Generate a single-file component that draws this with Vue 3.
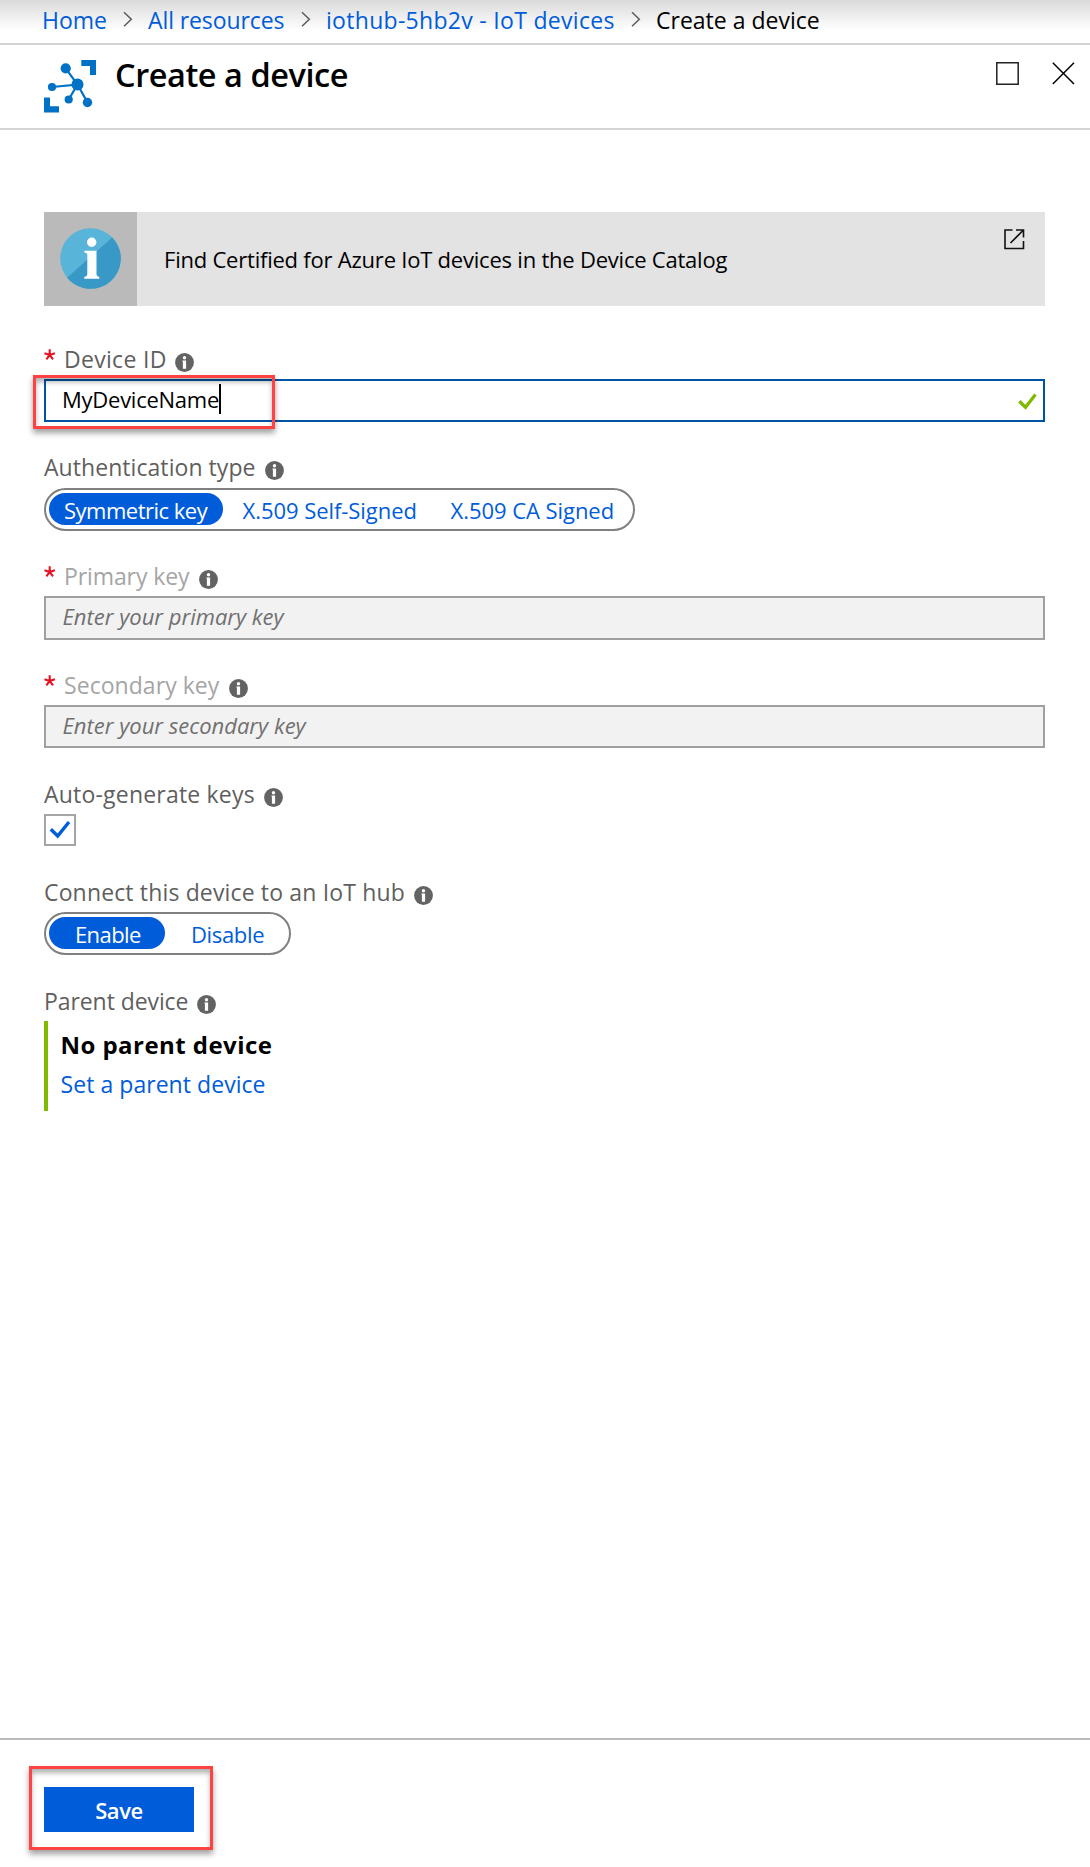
<script setup>
import { ref, h } from 'vue'

const deviceId = ref('MyDeviceName')
const authTypes = [
  { label: 'Symmetric key', cls: 'opt-sym' },
  { label: 'X.509 Self-Signed', cls: 'opt-self' },
  { label: 'X.509 CA Signed', cls: 'opt-ca' }
]
const authType = ref('Symmetric key')
const hubStates = [
  { label: 'Enable', cls: 'opt-on' },
  { label: 'Disable', cls: 'opt-off' }
]
const hubState = ref('Enable')

const InfoIcon = () =>
  h('svg', { width: 19, height: 19, viewBox: '0 0 19 19' }, [
    h('circle', { cx: 9.5, cy: 9.5, r: 9.4, fill: '#636363' }),
    h('circle', { cx: 9.5, cy: 4.7, r: 1.7, fill: '#fff' }),
    h('path', { d: 'M7.4 7.5h3.7v8.2H7.9V8.6h-.5z', fill: '#fff' })
  ])
const Chevron = () =>
  h('svg', { width: 10, height: 17, viewBox: '0 0 10 17' }, [
    h('path', { d: 'M1 1.3 8.3 8.3 1 15.3', fill: 'none', stroke: '#5c5c5c', 'stroke-width': 1.5 })
  ])
const Required = () =>
  h('svg', { width: 12, height: 12, viewBox: '0 0 12 12' }, [
    h('path', {
      d: 'M5.7 5.9V0.3M5.7 5.9 0.5 4.2M5.7 5.9 10.9 4.2M5.7 5.9 2.4 10.3M5.7 5.9 9 10.3',
      fill: 'none', stroke: '#e81123', 'stroke-width': 2.1
    })
  ])
</script>

<template>
  <div class="blade">
    <nav class="crumbs">
      <a class="c-home">Home</a><Chevron class="chev" />
      <a class="c-all">All resources</a><Chevron class="chev" />
      <a class="c-hub">iothub-5hb2v - IoT devices</a><Chevron class="chev" />
      <span class="c-now">Create a device</span>
    </nav>

    <header class="head">
      <svg class="logo" width="53" height="53" viewBox="0 0 53 53">
        <g fill="#0072c6">
          <path d="M37.3 0H52v15h-6V6h-8.700z M0 37.500h6v8.700h9V52.500H0z" />
          <circle cx="21.700" cy="8.300" r="5.100" />
          <circle cx="8" cy="27" r="4.100" />
          <circle cx="33.500" cy="24.500" r="6" />
          <circle cx="24.700" cy="39.500" r="4.100" />
          <circle cx="43.500" cy="42.500" r="4.700" />
        </g>
        <path d="M21.700 8.300 33.500 24.500 8 27M24.700 39.500 33.500 24.500 43.500 42.500" fill="none" stroke="#0072c6" stroke-width="2.200" />
      </svg>
      <h1>Create a device</h1>
      <div class="win">
        <svg width="23" height="23" viewBox="0 0 23 23"><path d="M.8.8h21.400v21.400H.8z" fill="none" stroke="#222" stroke-width="1.500" /></svg>
        <svg width="23" height="23" viewBox="0 0 23 23"><path d="M.8.8 22 22M22 .8.8 22" fill="none" stroke="#000" stroke-width="1.500" /></svg>
      </div>
    </header>

    <main class="body">
      <div class="banner">
        <div class="banner-icon">
          <svg width="61" height="61" viewBox="0 0 61 61">
            <circle cx="30.500" cy="30.500" r="30.300" fill="#59b4d9" />
            <path d="M52.220 9.380A30.300 30.300 0 1 1 7.050 49.690z" fill="#3999c6" />
            <circle cx="31.700" cy="14.300" r="4.700" fill="#fff" />
            <path d="M24.300 22.700H36.500V46.500Q36.500 48.300 39.300 49V50.700H24.300V49Q27.300 48.300 27.300 46.500V26.500Q27.300 24.700 24.300 24.400z" fill="#fff" />
          </svg>
        </div>
        <span class="banner-text">Find Certified for Azure IoT devices in the Device Catalog</span>
        <svg class="ext" width="21" height="21" viewBox="0 0 21 21">
          <path d="M8.500 1H1V19.500H19.500V12M12 1H19.500V8.500M19.500 1 6.500 14" fill="none" stroke="#111" stroke-width="1.600" />
        </svg>
      </div>

      <section class="field">
        <div class="label"><Required class="req" /><span class="l-id">Device ID</span><InfoIcon class="info" /></div>
        <div class="input focus">
          <span class="value">{{ deviceId }}</span><i class="caret"></i>
          <svg class="ok" width="19" height="17" viewBox="0 0 19 17"><path d="M1.300 8.200 7.500 14.300 17.500 1.500" fill="none" stroke="#7fba00" stroke-width="3.300" /></svg>
          <div class="mark mark-id"></div>
        </div>
      </section>

      <section class="field tight">
        <div class="label"><span class="l-auth">Authentication type</span><InfoIcon class="info" /></div>
        <div class="pill pill-auth">
          <button v-for="o in authTypes" :key="o.label" :class="[o.cls, { on: authType === o.label }]" @click="authType = o.label">{{ o.label }}</button>
        </div>
      </section>

      <section class="field tight">
        <div class="label off"><Required class="req" /><span class="l-pri">Primary key</span><InfoIcon class="info" /></div>
        <div class="input disabled tall"><span class="ph">Enter your primary key</span></div>
      </section>

      <section class="field">
        <div class="label off"><Required class="req" /><span class="l-sec">Secondary key</span><InfoIcon class="info" /></div>
        <div class="input disabled"><span class="ph">Enter your secondary key</span></div>
      </section>

      <section class="field">
        <div class="label"><span class="l-auto">Auto-generate keys</span><InfoIcon class="info" /></div>
        <div class="check">
          <svg width="22" height="20" viewBox="0 0 22 20"><path d="M1.800 9.200 8.700 16 20 2" fill="none" stroke="#015cda" stroke-width="3.400" /></svg>
        </div>
      </section>

      <section class="field">
        <div class="label"><span class="l-con">Connect this device to an IoT hub</span><InfoIcon class="info" /></div>
        <div class="pill pill-hub">
          <button v-for="o in hubStates" :key="o.label" :class="[o.cls, { on: hubState === o.label }]" @click="hubState = o.label">{{ o.label }}</button>
        </div>
      </section>

      <section class="field">
        <div class="label"><span class="l-par">Parent device</span><InfoIcon class="info" /></div>
        <div class="parent">
          <strong>No parent device</strong>
          <a>Set a parent device</a>
        </div>
      </section>
    </main>

    <footer class="foot">
      <div class="save-wrap">
        <button class="save">Save</button>
        <div class="mark mark-save"></div>
      </div>
    </footer>
  </div>
</template>

<style>
body { margin: 0; background: #fff; }
</style>

<style scoped>
.blade {
  display: flex;
  flex-direction: column;
  width: 1090px;
  height: 1867px;
  overflow: hidden;
  box-sizing: border-box;
  font-family: "Open Sans", "Noto Sans", sans-serif;
  font-size: 23px;
  color: #000;
  background: #fff;
}
.blade * { box-sizing: border-box; }
button { border: 0; padding: 0; margin: 0; background: none; font: inherit; color: inherit; }
svg { display: block; flex: none; }
a { color: #015cda; }

.crumbs {
  display: flex;
  height: 45px;
  padding-left: 42px;
  border-bottom: 2px solid #d4d4d4;
  background: linear-gradient(#dadada, #fff 30px);
  line-height: 40px;
  white-space: nowrap;
}
.chev { margin: 11px 0 0 17px; }
.c-home { width: 64px; }
.chev + a, .chev + span { margin-left: 15px; }
.c-all { width: 136px; letter-spacing: -0.1px; }
.c-hub { width: 288px; letter-spacing: 0.3px; }

.head {
  display: flex;
  height: 85px;
  padding: 0 15px 0 44px;
  border-bottom: 2px solid #d4d4d4;
}
.logo { margin-top: 15px; }
h1 { margin: 0 auto 0 18px; font-size: 32.5px; font-weight: 600; line-height: 59px; letter-spacing: -0.45px; }
.win { display: flex; gap: 33px; margin-top: 17px; }

.body { flex: 1; padding: 82px 45px 0 44px; }
.banner { display: flex; height: 94px; margin-bottom: 37px; background: #e3e3e3; }
.banner-icon { display: flex; width: 93px; padding: 16px 0 0 16px; background: #bababa; }
.banner-text { flex: 1; padding-left: 27px; font-size: 22px; line-height: 95px; letter-spacing: -0.22px; }
.ext { margin: 17px 20px 0 0; }

.field { margin-bottom: 30px; }
.tight { margin-bottom: 29px; }
.label { display: flex; height: 36px; line-height: 33px; color: #5f5f5f; white-space: nowrap; }
.tight .label:not(.off) { line-height: 31px; }
.tight .label:not(.off) .info { margin-top: 9px; }
.off { color: #a5a5a5; }
.req { margin: 6px 8px 0 0; }
.info { margin: 10px 0 0 10px; }
.l-id { letter-spacing: 0.3px; width: 101px; }
.l-auth { letter-spacing: 0.06px; width: 211px; }
.l-pri { letter-spacing: -0.1px; width: 125px; }
.l-sec { width: 155px; letter-spacing: 0.05px; }
.l-auto { letter-spacing: 0.2px; width: 210px; }
.l-con { letter-spacing: 0.15px; width: 359.500px; }
.l-par { width: 143px; letter-spacing: -0.08px; }

.input {
  position: relative;
  display: flex;
  height: 43px;
  padding-left: 16px;
  border: 2px solid #a0a0a0;
  font-size: 22px;
  line-height: 37px;
  white-space: nowrap;
}
.tall { height: 44px; }
.focus { border-color: #0054a6; line-height: 37px; }
.disabled { background: #f2f2f2; }
.ph { margin-left: 0.500px; font-style: italic; color: #707070; }
.value { letter-spacing: -0.25px; }
.caret { width: 2px; height: 30px; margin: 3px 0 0 0; background: #000; }
.ok { margin: 12px 6px 0 auto; }

.mark {
  position: absolute;
  border: 3px solid #ff4343;
  box-shadow: 0 4px 6px rgba(0, 0, 0, 0.38), inset 0 4px 5px rgba(0, 0, 0, 0.3);
}
.mark-id { left: -13px; top: -6px; width: 242px; height: 54px; }
.mark-save { left: -15px; top: -21px; width: 184px; height: 84px; pointer-events: none; }

.pill {
  display: flex;
  height: 43px;
  padding: 3px;
  border: 2px solid #808080;
  border-radius: 22px;
  font-size: 22px;
  line-height: 34px;
  color: #015cda;
}
.pill button { height: 32px; line-height: 34px; white-space: nowrap; text-align: left; }
.pill .on { background: #015cda; color: #fff; border-radius: 16px; }
.pill-auth { width: 591px; }
.opt-sym { width: 174px; padding-left: 15px !important; letter-spacing: -0.5px; }
.opt-self { width: 209px; padding-left: 19.500px !important; letter-spacing: -0.05px; }
.opt-ca { padding-left: 18.500px !important; letter-spacing: -0.05px; }
.pill-hub { width: 247px; }
.opt-on { width: 116px; padding-left: 26px !important; letter-spacing: -0.6px; }
.opt-off { padding-left: 26px !important; letter-spacing: -0.35px; }

.check { display: flex; width: 32px; height: 32px; padding: 4px 0 0 3px; border: 2px solid #a5a5a5; }

.parent {
  display: flex;
  flex-direction: column;
  height: 90px;
  padding: 4px 0 0 12.500px;
  border-left: 4px solid #7fba00;
}
.parent strong { font-size: 24px; line-height: 40px; letter-spacing: 0.45px; }
.parent a { letter-spacing: 0.05px; line-height: 38px; }

.foot { height: 129px; padding: 47px 0 0 44px; border-top: 2px solid #b9b9b9; }
.save-wrap { position: relative; width: 150px; height: 45px; }
.save { width: 150px; height: 45px; background: #015cda; color: #fff; font-size: 22px; font-weight: 600; line-height: 46px; letter-spacing: -0.4px; }
</style>
